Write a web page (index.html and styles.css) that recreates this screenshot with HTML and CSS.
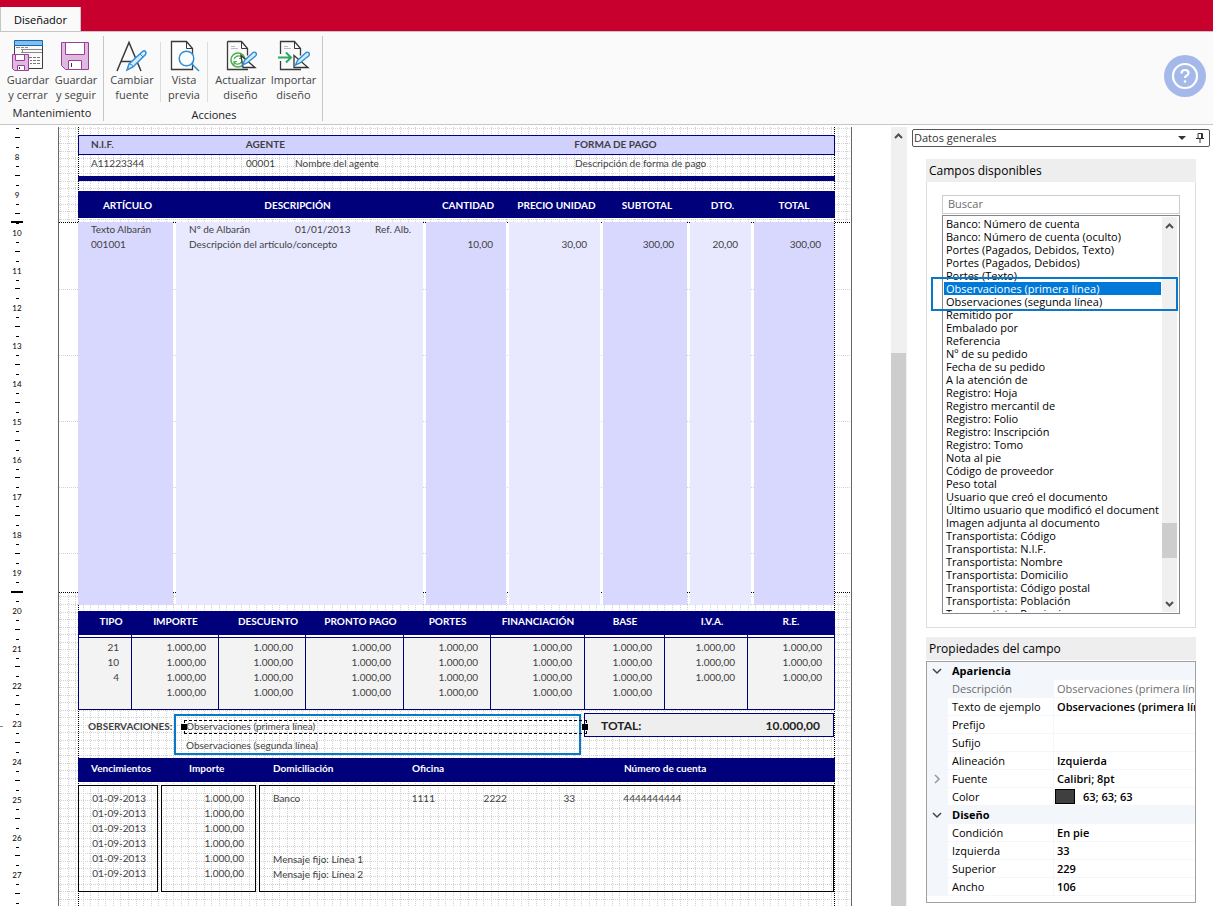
FILE: index.html
```html
<!DOCTYPE html>
<html lang="es">
<head>
<meta charset="utf-8">
<title>Diseñador</title>
<link rel="stylesheet" href="styles.css">
</head>
<body>
<header class="topbar"><button class="tab" type="button">Diseñador</button></header>
<div class="ribbon">
  <section class="group">
    <div class="tools">
      <button class="tool" type="button">
        <svg width="32" height="32" viewBox="0 0 32 32"><path d="M2.500 1.500h28v27h-28z" fill="#fafafa" stroke="#3a3a3a"/><path d="M2.500.500h28v5h-28z" fill="#83beec" stroke="#0f6ab4"/><path d="M4 7.500h4m1 0h3m1 0h3M9 9.500h21M9 12.500h21M10.500 9v4" stroke="#8a8a8a" fill="none"/><path d="M17 17.500h3m1 0h3m1 0h3M18 20.500h2m1 0h3m1 0h3M18 23.500h2m1 0h3m1 0h3" stroke="#777" fill="none"/><path d="M.500 14.500h16v16h-14l-2-2z" fill="#dfb9df" stroke="#9c3f9c"/><path d="M3.500 14.500h9v6h-9zM5.500 25.500h7v5h-7z" fill="#fff" stroke="#9c3f9c"/><path d="M7.500 27v2" stroke="#333"/></svg>
        <span>Guardar<br>y cerrar</span>
      </button>
      <button class="tool" type="button">
        <svg width="32" height="32" viewBox="0 0 32 32"><path d="M1.500 2.500h27v27h-23l-4-4z" fill="#dfb9df" stroke="#9c3f9c"/><path d="M5.500 2.500h19v12h-19zM8.500 20.500h13v9h-13z" fill="#fff" stroke="#9c3f9c"/><path d="M11.500 23v4" stroke="#333"/></svg>
        <span>Guardar<br>y seguir</span>
      </button>
    </div>
    <h2>Mantenimiento</h2>
  </section>
  <section class="group actions">
    <div class="tools">
      <button class="tool" type="button">
        <svg width="32" height="32" viewBox="0 0 32 32"><path d="M1 31 13 2.500 25 31M5 21.500h17" fill="none" stroke="#3a3a3a" stroke-width="1.500"/><path d="M11 30l2-6L26.500 11.500q2-1.500 3 0t0 3L17 27z" fill="#d6ebfa" stroke="#2f8fd6" stroke-width="1.500"/><path d="M13.500 24q3 0 3.500 3M24 14l3 3" fill="none" stroke="#2f8fd6"/></svg>
        <span>Cambiar<br>fuente</span>
      </button>
      <i class="rule"></i>
      <button class="tool narrow" type="button">
        <svg width="32" height="32" viewBox="0 0 32 32"><path d="M3.500 1.500h15l6 7v21h-21z" fill="#fff" stroke="#3a3a3a" stroke-width="1.300"/><path d="M18.500 2v6.500h6" fill="none" stroke="#3a3a3a"/><circle cx="18.500" cy="18.500" r="7.300" fill="#fafdff" stroke="#2f8fd6" stroke-width="1.500"/><path d="M24 24l7 7" stroke="#2f8fd6" stroke-width="1.500"/></svg>
        <span>Vista<br>previa</span>
      </button>
      <i class="rule"></i>
      <button class="tool wide" type="button">
        <svg width="32" height="32" viewBox="0 0 32 32"><path d="M2.500 1.500h14l6 7v7M23 29.500H2.500v-28" fill="none" stroke="#3a3a3a" stroke-width="1.300"/><path d="M16.500 2v6.500h6" fill="none" stroke="#3a3a3a"/><path d="M6 6.500h4M6 8.500h7" stroke="#bbb"/><circle cx="13" cy="20" r="7" fill="#fff" stroke="#4ab04a" stroke-width="1.500"/><path d="M9 19q2-4 6-3l2 2m0-3v3.500h-3M17 21q-2 4-6 3l-2-2m0 3v-3.500h3" fill="none" stroke="#4ab04a" stroke-width="1.200"/><path d="M16 15.500 30 27.500H18z" fill="#fff" stroke="#333" stroke-width="1.300"/><path d="M17.500 25l2-4.500L28 12.500q2-1 3 .500t-.500 3L22 23z" fill="#d6ebfa" stroke="#2f8fd6" stroke-width="1.400"/></svg>
        <span>Actualizar<br>diseño</span>
      </button>
      <button class="tool wide" type="button">
        <svg width="32" height="32" viewBox="0 0 32 32"><path d="M2.500 14v-12.500h14l6 7v7M23 29.500H2.500V21" fill="none" stroke="#3a3a3a" stroke-width="1.300"/><path d="M16.500 2v6.500h6" fill="none" stroke="#3a3a3a"/><path d="M6 6.500h4M6 8.500h7" stroke="#bbb"/><path d="M0 17.500h12M8 12.500l5 5-5 5" fill="none" stroke="#2fa866" stroke-width="2"/><path d="M16 15.500 30 27.500H16z" fill="#fff" stroke="#333" stroke-width="1.300"/><path d="M17.500 25l2-4.500L28 12.500q2-1 3 .500t-.500 3L22 23z" fill="#d6ebfa" stroke="#2f8fd6" stroke-width="1.400"/></svg>
        <span>Importar<br>diseño</span>
      </button>
    </div>
    <h2>Acciones</h2>
  </section>
  <button class="help" type="button" aria-label="Ayuda"><svg width="42" height="42" viewBox="0 0 42 42"><circle cx="21" cy="21" r="21" fill="#a4b9ea"/><circle cx="21" cy="21" r="12" fill="none" stroke="#fff" stroke-width="2.200"/><path d="M17.500 18.500q0-3.500 3.500-3.500t3.500 3q0 1.600-2 2.700-1.500.800-1.500 2.300" fill="none" stroke="#fff" stroke-width="2.200"/><circle cx="21" cy="26.500" r="1.300" fill="#fff"/></svg></button>
</div>
<main class="work">
  <div class="ruler">
    <div class="lead"></div>
    <div class="cm">8</div><div class="cm">9</div><div class="cm">10</div><div class="cm">11</div><div class="cm">12</div><div class="cm">13</div><div class="cm">14</div><div class="cm">15</div><div class="cm">16</div><div class="cm">17</div><div class="cm">18</div><div class="cm">19</div><div class="cm">20</div><div class="cm">21</div><div class="cm">22</div><div class="cm">23</div><div class="cm">24</div><div class="cm">25</div><div class="cm">26</div><div class="cm">27</div><div class="cm"></div>
    <i class="mark start"></i><i class="mark end"></i><i class="splitter"></i>
  </div>
  <div class="page">
    <svg class="grid" width="100%" height="100%" aria-hidden="true">
      <defs>
        <pattern id="cols" x="1" y="0" width="68" height="2" patternUnits="userSpaceOnUse"><path d="M0 0h1v1h-1zM8 0h1v1h-1zM15 0h1v1h-1zM23 0h1v1h-1zM30 0h1v1h-1zM38 0h1v1h-1zM45 0h1v1h-1zM53 0h1v1h-1zM60 0h1v1h-1z" fill="#d2d2d2"/></pattern>
        <pattern id="rows" x="0" y="1" width="2" height="68" patternUnits="userSpaceOnUse"><path d="M0 0h1v1h-1zM0 8h1v1h-1zM0 15h1v1h-1zM0 23h1v1h-1zM0 30h1v1h-1zM0 38h1v1h-1zM0 45h1v1h-1zM0 53h1v1h-1zM0 60h1v1h-1z" fill="#d2d2d2"/></pattern>
        <pattern id="wide" x="0" y="96" width="2" height="66" patternUnits="userSpaceOnUse"><path d="M0 0h1v1h-1z" fill="#d2d2d2"/></pattern>
        <pattern id="ink" width="2" height="2" patternUnits="userSpaceOnUse"><path d="M0 0h1v2h-1z"/></pattern>
      </defs>
      <rect width="100%" height="95" fill="url(#cols)"/><rect width="100%" height="95" fill="url(#rows)"/>
      <rect y="98" width="100%" height="366" fill="url(#wide)"/>
      <rect y="466" width="100%" height="400" fill="url(#cols)"/><rect y="466" width="100%" height="400" fill="url(#rows)"/>
      <rect y="95" width="100%" height="1" fill="url(#ink)"/><rect y="465" width="100%" height="1" fill="url(#ink)"/>
    </svg>
    <div class="sheet">
      <div class="client head"><b>N.I.F.</b><b>AGENTE</b><b>FORMA DE PAGO</b></div>
      <div class="client data"><span>A11223344</span><span>00001</span><span>Nombre del agente</span><span>Descripción de forma de pago</span></div>
      <div class="bar"></div>
      <table class="lines">
        <thead><tr><th>ARTÍCULO</th><th>DESCRIPCIÓN</th><th>CANTIDAD</th><th>PRECIO UNIDAD</th><th>SUBTOTAL</th><th>DTO.</th><th>TOTAL</th></tr></thead>
        <tbody><tr>
          <td>Texto Albarán<br>001001</td>
          <td><div class="ref"><span>Nº de Albarán</span><span>01/01/2013</span><span>Ref. Alb.</span></div>Descripción del artículo/concepto</td>
          <td><br>10,00</td><td><br>30,00</td><td><br>300,00</td><td><br>20,00</td><td><br>300,00</td>
        </tr></tbody>
      </table>
      <table class="totals">
        <thead><tr><th class="in">TIPO</th><th>IMPORTE</th><th class="in">DESCUENTO</th><th class="in">PRONTO PAGO</th><th>PORTES</th><th>FINANCIACIÓN</th><th>BASE</th><th class="in">I.V.A.</th><th>R.E.</th></tr></thead>
        <tbody>
          <tr><td>21</td><td>1.000,00</td><td>1.000,00</td><td>1.000,00</td><td>1.000,00</td><td>1.000,00</td><td>1.000,00</td><td>1.000,00</td><td>1.000,00</td></tr>
          <tr><td>10</td><td>1.000,00</td><td>1.000,00</td><td>1.000,00</td><td>1.000,00</td><td>1.000,00</td><td>1.000,00</td><td>1.000,00</td><td>1.000,00</td></tr>
          <tr><td>4</td><td>1.000,00</td><td>1.000,00</td><td>1.000,00</td><td>1.000,00</td><td>1.000,00</td><td>1.000,00</td><td>1.000,00</td><td>1.000,00</td></tr>
          <tr><td></td><td>1.000,00</td><td>1.000,00</td><td>1.000,00</td><td>1.000,00</td><td>1.000,00</td><td>1.000,00</td><td></td><td></td></tr>
        </tbody>
      </table>
      <div class="summary">
        <b class="obs-label">OBSERVACIONES:</b>
        <div class="obs"><span>Observaciones (primera línea)</span><span>Observaciones (segunda línea)</span><div class="selection"></div></div>
        <div class="total"><b>TOTAL:</b><b>10.000,00</b></div>
      </div>
      <div class="due head"><b>Vencimientos</b><b>Importe</b><b>Domiciliación</b><b>Oficina</b><b>Número de cuenta</b></div>
      <div class="boxes">
        <div class="box num">01-09-2013<br>01-09-2013<br>01-09-2013<br>01-09-2013<br>01-09-2013<br>01-09-2013</div>
        <div class="box num">1.000,00<br>1.000,00<br>1.000,00<br>1.000,00<br>1.000,00<br>1.000,00</div>
        <div class="box bank">
          <div class="account"><span>Banco</span><span>1111</span><span>2222</span><span>33</span><span>4444444444</span></div>
          <div>Mensaje fijo: Línea 1<br>Mensaje fijo: Línea 2</div>
        </div>
      </div>
    </div>
  </div>
  <div class="scroll main-scroll"><svg width="15" height="17" viewBox="0 0 15 17"><path d="M4 11l3.500-3.500L11 11" fill="none" stroke="#505050" stroke-width="2"/></svg><div class="thumb"></div></div>
  <aside class="panel">
    <div class="panel-title"><span>Datos generales</span>
      <button type="button" aria-label="Menú"><svg width="10" height="10" viewBox="0 0 10 10"><path d="M1 3h8L5 7z" fill="#333"/></svg></button>
      <button type="button" aria-label="Fijar"><svg width="10" height="10" viewBox="0 0 10 10"><path d="M3 .500h4.500v5H3zM6.500 0v6M1 5.500h8M5 6v4" fill="none" stroke="#333"/></svg></button>
    </div>
    <section class="card fields">
      <h3>Campos disponibles</h3>
      <div class="fields-body">
        <input class="search" type="text" placeholder="Buscar" aria-label="Buscar">
        <div class="listbox">
          <ul role="listbox" aria-label="Campos disponibles">
            <li>Banco: Número de cuenta</li><li>Banco: Número de cuenta (oculto)</li><li>Portes (Pagados, Debidos, Texto)</li><li>Portes (Pagados, Debidos)</li><li>Portes (Texto)</li><li class="on">Observaciones (primera línea)</li><li>Observaciones (segunda línea)</li><li>Remitido por</li><li>Embalado por</li><li>Referencia</li><li>Nº de su pedido</li><li>Fecha de su pedido</li><li>A la atención de</li><li>Registro: Hoja</li><li>Registro mercantil de</li><li>Registro: Folio</li><li>Registro: Inscripción</li><li>Registro: Tomo</li><li>Nota al pie</li><li>Código de proveedor</li><li>Peso total</li><li>Usuario que creó el documento</li><li>Último usuario que modificó el document</li><li>Imagen adjunta al documento</li><li>Transportista: Código</li><li>Transportista: N.I.F.</li><li>Transportista: Nombre</li><li>Transportista: Domicilio</li><li>Transportista: Código postal</li><li>Transportista: Población</li><li>Transportista: Provincia</li>
          </ul>
          <div class="scroll list-scroll"><svg width="15" height="17" viewBox="0 0 15 17"><path d="M4 11l3.500-3.500L11 11" fill="none" stroke="#505050" stroke-width="2"/></svg><div class="thumb"></div><svg width="15" height="17" viewBox="0 0 15 17"><path d="M4 7l3.500 3.500L11 7" fill="none" stroke="#505050" stroke-width="2"/></svg></div>
          <div class="callout"></div>
        </div>
      </div>
    </section>
    <section class="card props">
      <h3>Propiedades del campo</h3>
      <table>
        <tbody>
          <tr class="cat"><td><svg width="10" height="8" viewBox="0 0 10 8"><path d="M1 2l4 4 4-4" fill="none" stroke="#444" stroke-width="1.500"/></svg></td><th colspan="2">Apariencia</th></tr>
          <tr class="off"><td></td><th>Descripción</th><td>Observaciones (primera línea)</td></tr>
          <tr><td></td><th>Texto de ejemplo</th><td>Observaciones (primera línea)</td></tr>
          <tr><td></td><th>Prefijo</th><td></td></tr>
          <tr><td></td><th>Sufijo</th><td></td></tr>
          <tr><td></td><th>Alineación</th><td>Izquierda</td></tr>
          <tr><td><svg width="10" height="10" viewBox="0 0 10 10"><path d="M3 1l4 4-4 4" fill="none" stroke="#999" stroke-width="1.500"/></svg></td><th>Fuente</th><td>Calibri; 8pt</td></tr>
          <tr><td></td><th>Color</th><td class="color"><i></i>63; 63; 63</td></tr>
          <tr class="cat"><td><svg width="10" height="8" viewBox="0 0 10 8"><path d="M1 2l4 4 4-4" fill="none" stroke="#444" stroke-width="1.500"/></svg></td><th colspan="2">Diseño</th></tr>
          <tr><td></td><th>Condición</th><td>En pie</td></tr>
          <tr><td></td><th>Izquierda</th><td>33</td></tr>
          <tr><td></td><th>Superior</th><td>229</td></tr>
          <tr><td></td><th>Ancho</th><td>106</td></tr>
        </tbody>
      </table>
    </section>
  </aside>
</main>
</body>
</html>
```
FILE: styles.css
```css
* { box-sizing: border-box; }
body { margin: 0; height: 100vh; display: flex; flex-direction: column; overflow: hidden; background: #fff; color: #000; font: 11px/13px "Open Sans", "Noto Sans", sans-serif; }
button { font: inherit; color: inherit; background: none; border: 0; padding: 0; }
svg { display: block; flex: none; }
h2, h3 { margin: 0; font-weight: 400; }

.topbar { display: flex; align-items: flex-end; height: 31px; flex: none; background: #c8002d; }
.tab { width: 81px; height: 24px; background: #fafafa; border-left: 1px solid #c6c6c6; border-right: 1px solid #c6c6c6; }

.ribbon { display: flex; height: 94px; flex: none; background: #fafafa; border-top: 1px solid #c6c6c6; border-bottom: 1px solid #c6c6c6; padding: 4px 7px 3px 0; }
.group { display: flex; flex-direction: column; border-right: 1px solid #c6c6c6; padding: 4px 3px 0 4px; }
.group h2 { text-align: center; font-size: 11px; line-height: 22px; color: #222; }
.tools { display: flex; height: 68px; }
.tool { width: 48px; display: flex; flex-direction: column; align-items: center; color: #444; line-height: 15px; text-align: center; }
.tool span { white-space: nowrap; }
.tool.narrow { width: 38px; }
.tool.wide { width: 53px; }
.actions { padding-right: 2px; }
.actions .rule + .wide { margin-left: 2px; }
.rule { width: 1px; height: 60px; margin: 2px 4px; background: #dcdcdc; flex: none; }
.help { margin: 19px 0 0 auto; align-self: flex-start; }

.work { flex: 1; min-height: 0; display: flex; padding-top: 2px; }

.ruler { position: relative; width: 58px; flex: none; overflow: hidden; font: 8px/10px Lato, sans-serif; }
.lead, .cm { background-repeat: no-repeat; }
.lead { height: 10px; background-image: linear-gradient(#000, #000); background-size: 3px 1px; background-position: 16px 1px; }
.cm { height: 38px; width: 34px; padding-top: 15px; text-align: center; background-image: linear-gradient(#000, #000), linear-gradient(#000, #000), linear-gradient(#000, #000); background-size: 5px 1px, 3px 1px, 3px 1px; background-position: 15px 0, 16px 10px, 16px 29px; }
.cm:nth-child(5n) { height: 37px; }
.mark { position: absolute; left: 11px; width: 12px; height: 2px; background: #000; }
.mark.start { top: 94px; }
.mark.end { top: 464px; }
.splitter { position: absolute; left: 0; top: 599px; width: 3px; height: 1px; background: #888; }

.page { position: relative; flex: 1; min-width: 0; border-left: 1px solid #666; border-right: 1px solid #666; padding: 0 16px 0 19px; margin-right: 39px; }
.grid { position: absolute; left: 0; top: 0; }
.sheet { position: relative; height: 100%; padding-top: 8px; color: #3f3f3f; font: 10px/15px Lato, sans-serif; background: repeating-linear-gradient(#000 0 1px, #fff 1px 2px) 0 0 / 1px 100% no-repeat, repeating-linear-gradient(#000 0 1px, #fff 1px 2px) 100% 0 / 1px 100% no-repeat; }
.client { display: grid; padding-left: 13px; align-items: center; }
.client.head { height: 20px; padding-left: 12px; grid-template-columns: 155fr 329fr 260fr; border: 1px solid #00007b; background: #d1d1ff; line-height: 13px; padding-bottom: 2px; }
.client.data { height: 21px; padding-bottom: 4px; grid-template-columns: 155fr 49fr 280fr 260fr; }
.bar { height: 5px; background: #00007b; }

.lines, .totals { display: block; }
.lines tr { display: grid; grid-template-columns: 95fr 247fr 80fr 91fr 84fr 61fr 80fr; gap: 3px; padding-right: 1px; }
.lines thead, .totals thead, .due.head { display: block; background: #00007b; color: #fff; }
th { font-weight: 700; padding: 0; white-space: nowrap; }
td { padding: 0; }
.lines thead { margin-top: 10px; }
.lines th { height: 27px; padding-left: 4px; line-height: 29px; }
.lines th:nth-child(2) { padding: 0 4px 0 0; }
.lines th:last-child { padding: 0; }
.lines tbody { display: block; margin-top: 4px; }
.lines td { height: 383px; padding: 0 13px; text-align: right; background: #d8d8ff; line-height: 15px; }
.lines td:nth-child(even) { background: #e8e8ff; }
.lines td:nth-child(-n+2) { text-align: left; }
.lines td:first-child { white-space: nowrap; }
.ref { display: grid; grid-template-columns: 106fr 80fr 48fr; height: 15px; margin-right: -13px; }

.totals { margin-top: 6px; }
.totals tr { display: grid; grid-template-columns: 53fr 87fr 87fr 98fr 87fr 94fr 80fr 83fr 88fr; }
.totals th { height: 24px; line-height: 21px; padding-left: 2px; }
.totals th.in { padding-left: 13px; }
.totals th:last-child { padding-left: 0; }
.totals tbody { display: block; }
.totals td { height: 15px; border-left: 1px solid #00007b; padding-right: 12px; text-align: right; background: #f3f3f3; }
.totals td:last-child { border-right: 1px solid #00007b; }
.totals tbody tr:first-child td { height: 20px; padding-top: 5px; background: linear-gradient(#fff 2px, #00007b 2px 3px, #f3f3f3 3px); }
.totals tbody tr:last-child td { height: 25px; border-bottom: 1px solid #00007b; }

.summary { display: grid; grid-template-columns: minmax(0, 96fr) minmax(0, 407fr) minmax(0, 253fr); height: 48px; padding: 3px 1px 0 0; align-items: start; }
.obs-label { padding: 6px 0 0 10px; }
.obs { position: relative; height: 41px; margin-top: 1px; border: 2px solid #0a78c8; padding: 1px 0 0 10px; line-height: 19px; display: flex; flex-direction: column; }
.selection { position: absolute; left: 8px; right: -8px; top: 4px; height: 14px; border: 1px dashed #000; }
.selection::before, .selection::after { content: ""; position: absolute; top: 3px; width: 6px; height: 6px; background: #000; }
.selection::before { left: -4px; }
.selection::after { right: -2px; z-index: 1; }
.total { display: flex; justify-content: space-between; align-items: center; height: 24px; margin-left: 3px; padding: 0 13px 0 16px; border: 1px solid #00007b; background: #eee; color: #222; font-size: 12px; }
.due.head { display: grid; grid-template-columns: 98fr 84fr 139fr 212fr 211fr; height: 24px; line-height: 21px; padding-left: 13px; }
.boxes { display: grid; grid-template-columns: 80fr 95fr 575fr; gap: 3px; padding-right: 1px; margin-top: 3px; }
.box { height: 107px; border: 1px solid #000; padding: 5px 11px 0 13px; }
.num { text-align: right; padding-left: 0; white-space: nowrap; }
.bank { display: grid; align-content: start; row-gap: 46px; padding-right: 0; }
.account { display: grid; grid-template-columns: 139fr 72fr 80fr 60fr 210fr; }

.scroll { display: flex; flex-direction: column; background: #f0f0f0; }
.main-scroll { width: 16px; flex: none; }
.main-scroll .thumb { flex: 1; margin: 209px 1px 0 0; background: #cdcdcd; }

.panel { width: 306px; flex: none; padding: 2px 3px 0 5px; display: flex; flex-direction: column; }
.panel-title { display: flex; align-items: center; gap: 8px; height: 18px; border: 1px solid #555; border-radius: 2px; padding: 0 4px 0 1px; color: #333; }
.panel-title span { flex: 1; line-height: 15px; padding-bottom: 1px; }
.card { margin: 12px 14px 0 14px; }
.card h3 { height: 23px; line-height: 23px; padding-left: 3px; background: #eee; font-size: 12px; }
.fields-body { border: 1px solid #ddd; border-top: 0; padding: 13px 15px; height: 446px; }
.search { display: block; width: 100%; height: 19px; border: 1px solid #ccc; padding: 0 5px 2px; font: inherit; background: #fff; }
.search::placeholder { color: #6d6d6d; opacity: 1; }
.listbox { position: relative; display: flex; height: 399px; margin-top: 1px; border: 1px solid #828790; padding: 1px 2px 1px 1px; }
.listbox ul { flex: 1; min-width: 0; margin: 0; padding: 0; list-style: none; overflow: hidden; }
.listbox li { padding-left: 2px; white-space: nowrap; margin-right: 1px; }
.listbox li.on { background: #0078d7; color: #fff; }
.list-scroll { width: 15px; flex: none; }
.list-scroll .thumb { height: 35px; margin-top: 289px; margin-bottom: auto; background: #cdcdcd; }
.callout { position: absolute; left: -12px; right: 1px; top: 61px; height: 34px; border: 2px solid #0a78c8; }

.props { margin-top: 9px; }
.props h3 { margin-bottom: 1px; }
.props table { display: block; height: 242px; border: 1px solid #a0a0a0; overflow: hidden; }
.props tbody { display: block; }
.props tr { display: grid; grid-template-columns: 20px 105px 1fr; height: 18px; line-height: 17px; gap: 1px; background: #f3f6fb; }
.props tr > * { display: flex; align-items: center; padding: 0 4px; background: #fff; margin-bottom: 1px; font-weight: 400; white-space: nowrap; overflow: hidden; text-align: left; }
.props tr > :first-child { padding: 0 0 0 5px; background: none; }
.props tr > :last-child { font-weight: 600; padding-left: 3px; }
.props tr.cat th { grid-column: 2 / 4; background: none; padding-left: 4px; font-weight: 700; }
.props tr.off > * { color: #6d6d6d; }
.props tr.off th { background: none; }
.props tr.off td:last-child { font-weight: 400; }
.color i { width: 20px; height: 15px; margin: 0 8px 0 -2px; border: 1px solid #000; background: #3f3f3f; flex: none; }
```
